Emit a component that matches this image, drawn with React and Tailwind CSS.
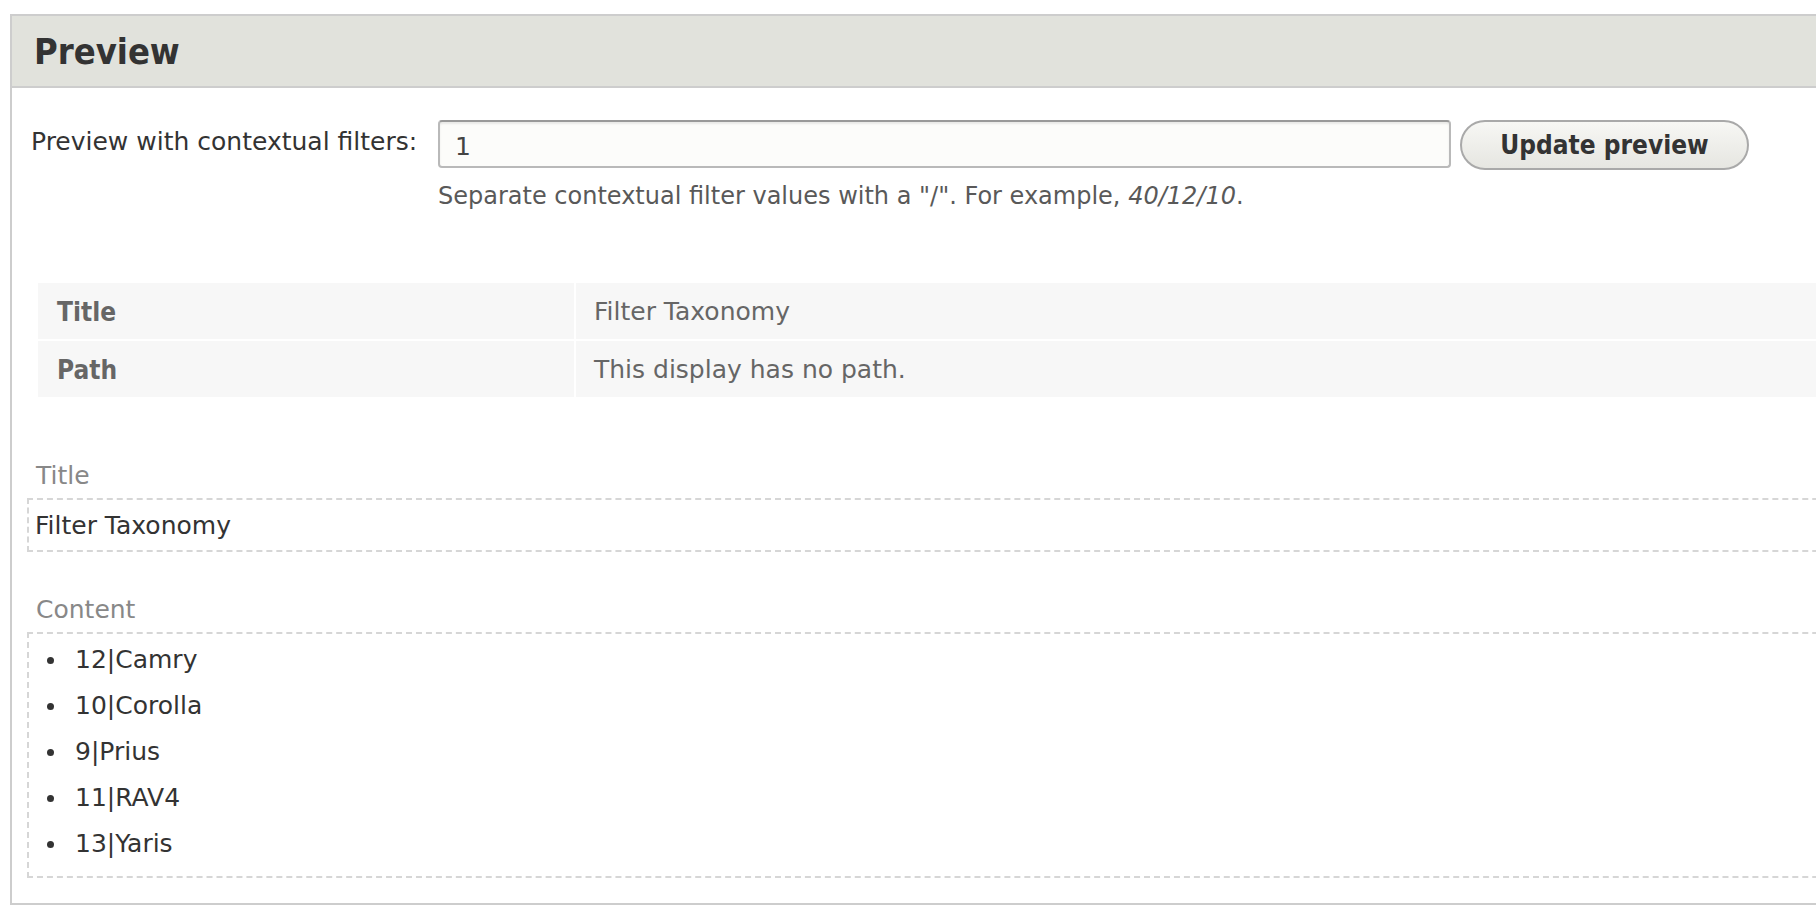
import React from "react";

const items = ["12|Camry", "10|Corolla", "9|Prius", "11|RAV4", "13|Yaris"];

export default function App() {
  return (
    <div className="w-full h-[922px] overflow-hidden bg-white font-['DejaVu_Sans',sans-serif] text-[25px]">
      <div className="mt-[14px] ml-[10px] w-[1900px] border-2 border-[#cdcdcd] bg-white">
        {/* fieldset header */}
        <div className="h-[72px] bg-[#e1e2dc] border-b-2 border-[#cdcdcd] pl-[22px]">
          <h2 className="font-['DejaVu_Sans_Condensed','DejaVu_Sans',sans-serif] font-bold text-[36px] leading-[72px] text-[#333]">
            Preview
          </h2>
        </div>

        <div className="pb-[25px]">
          {/* contextual filters row */}
          <div className="flex items-start mt-[32px] pl-[19px]">
            <label className="w-[407px] shrink-0 pt-[7px] leading-[29px] text-[#333]">
              Preview with contextual filters:
            </label>
            <input
              type="text"
              defaultValue="1"
              className="w-[1013px] h-[48px] shrink-0 rounded-[4px] border-2 border-[#b9b9b9] border-t-[#999] bg-[#fcfcfa] pl-[15px] pt-[4px] text-[25px] text-[#444] shadow-[inset_0_2px_2px_rgba(0,0,0,0.08)] outline-none"
            />
            <button className="ml-[9px] w-[289px] h-[50px] shrink-0 rounded-full border-2 border-[#a9a9a9] bg-gradient-to-b from-[#f7f7f4] to-[#e6e6e1] font-['DejaVu_Sans_Condensed','DejaVu_Sans',sans-serif] font-bold text-[26px] text-[#333]">
              Update preview
            </button>
          </div>
          <div className="mt-[12px] ml-[426px] text-[24px] leading-[29px] text-[#595959]">
            Separate contextual filter values with a "/". For example, <em>40/12/10</em>.
          </div>

          {/* view info table */}
          <div className="mt-[72px] ml-[26px] flex flex-col gap-[2px] text-[#666]">
            <div className="flex gap-[2px] h-[56px]">
              <div className="w-[536px] shrink-0 bg-[#f7f7f7] pl-[19px] pt-[2px] leading-[54px] font-['DejaVu_Sans_Condensed','DejaVu_Sans',sans-serif] font-bold text-[26px]">
                Title
              </div>
              <div className="flex-1 bg-[#f7f7f7] pl-[18px] pt-[2px] leading-[54px]">Filter Taxonomy</div>
            </div>
            <div className="flex gap-[2px] h-[56px]">
              <div className="w-[536px] shrink-0 bg-[#f7f7f7] pl-[19px] pt-[2px] leading-[54px] font-['DejaVu_Sans_Condensed','DejaVu_Sans',sans-serif] font-bold text-[26px]">
                Path
              </div>
              <div className="flex-1 bg-[#f7f7f7] pl-[18px] pt-[2px] leading-[54px]">This display has no path.</div>
            </div>
          </div>

          {/* rendered fields */}
          <div className="mt-[64px] ml-[24px] leading-[29px] text-[#888]">Title</div>
          <div className="mt-[8px] ml-[15px] border-2 border-dashed border-[#d6d6d6] pl-[6px] pt-[11px] pb-[10px] leading-[29px] text-[#333]">
            Filter Taxonomy
          </div>

          <div className="mt-[43px] ml-[24px] leading-[29px] text-[#888]">Content</div>
          <div className="mt-[8px] ml-[15px] border-2 border-dashed border-[#d6d6d6] pt-[3px] pb-[9px]">
            <ul>
              {items.map((item) => (
                <li key={item} className="flex items-center h-[46px] text-[#333]">
                  <span className="ml-[18px] w-[7px] h-[7px] rounded-full bg-[#333]" />
                  <span className="ml-[21px] leading-[46px]">{item}</span>
                </li>
              ))}
            </ul>
          </div>
        </div>
      </div>
    </div>
  );
}
